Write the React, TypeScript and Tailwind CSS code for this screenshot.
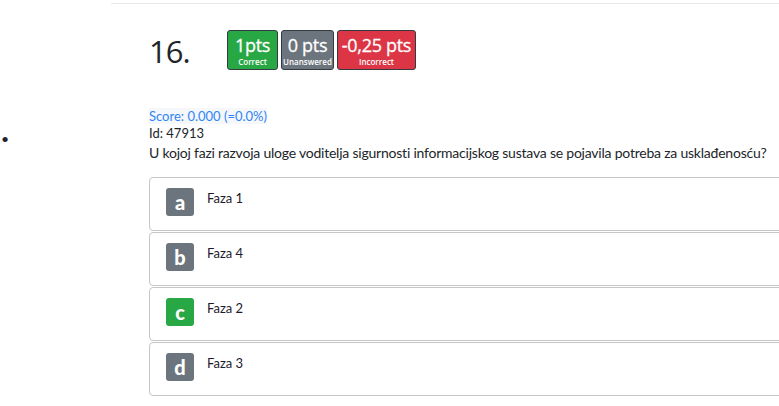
import React from "react";

const answers = [
  { letter: "a", text: "Faza 1", correct: false },
  { letter: "b", text: "Faza 4", correct: false },
  { letter: "c", text: "Faza 2", correct: true },
  { letter: "d", text: "Faza 3", correct: false },
];

const PtsBadge = ({
  value,
  label,
  color,
}: {
  value: string;
  label: string;
  color: string;
}) => (
  <div
    className={`flex h-[40px] flex-col items-center rounded-[3px] border border-[#343a40] pt-[3px] text-white ${color}`}
  >
    <span className="text-[18px] leading-[22px] tracking-[-0.3px] [-webkit-text-stroke:0.3px_white]">
      {value}
    </span>
    <span className="text-[8px] leading-[11px] font-semibold">{label}</span>
  </div>
);

export default function App() {
  return (
    <div className="h-[406px] w-[779px] overflow-hidden bg-white font-['Lato',sans-serif] text-[#212529]">
      <div className="ml-[111px] h-[4px] border-b border-[#e6e8eb]"></div>
      <div className="flex">
        <div className="w-[149px] shrink-0 pt-[127px] pl-[1px] text-[14px] leading-[16px]">
          •
        </div>
        <div className="w-[660px] shrink-0">
          <div className="flex items-start pt-[26px] font-['Open_Sans',sans-serif]">
            <span className="w-[78px] pt-[1px] text-[31px] leading-[40px] tracking-[-1px]">16.</span>
            <div className="flex gap-[3px]">
              <div className="w-[51px]">
                <PtsBadge value="1pts" label="Correct" color="bg-[#28a745]" />
              </div>
              <div className="w-[53px]">
                <PtsBadge value="0 pts" label="Unanswered" color="bg-[#6c757d]" />
              </div>
              <div className="w-[79px]">
                <PtsBadge value="-0,25 pts" label="Incorrect" color="bg-[#dc3545]" />
              </div>
            </div>
          </div>
          <div className="mt-[37px] text-[13px] leading-[17px]">
            <span className="bg-[#f5f7fa] text-[#2f86f6]">Score: 0.000 (=0.0%)</span>
          </div>
          <div className="text-[13px] leading-[17px]">Id: 47913</div>
          <div className="mt-[1px] whitespace-nowrap text-[14px] leading-[20px] tracking-[-0.22px]">
            U kojoj fazi razvoja uloge voditelja sigurnosti informacijskog sustava se pojavila potreba za usklađenosću?
          </div>
          <div className="mt-[14px] flex flex-col gap-[1px]">
            {answers.map((a) => (
              <div
                key={a.letter}
                className="flex h-[54px] items-start gap-[13px] rounded-[4px] border border-[#c6c6c6] pl-[16px] pt-[10px]"
              >
                <div
                  className={`flex h-[28px] w-[28px] items-center justify-center rounded-[3px] text-[20px] font-black text-white ${
                    a.correct ? "bg-[#28a745]" : "bg-[#6c757d]"
                  }`}
                >
                  {a.letter}
                </div>
                <div className="pt-[1px] text-[13px] leading-[18px] text-[#1d1a2e]">{a.text}</div>
              </div>
            ))}
          </div>
        </div>
      </div>
    </div>
  );
}
